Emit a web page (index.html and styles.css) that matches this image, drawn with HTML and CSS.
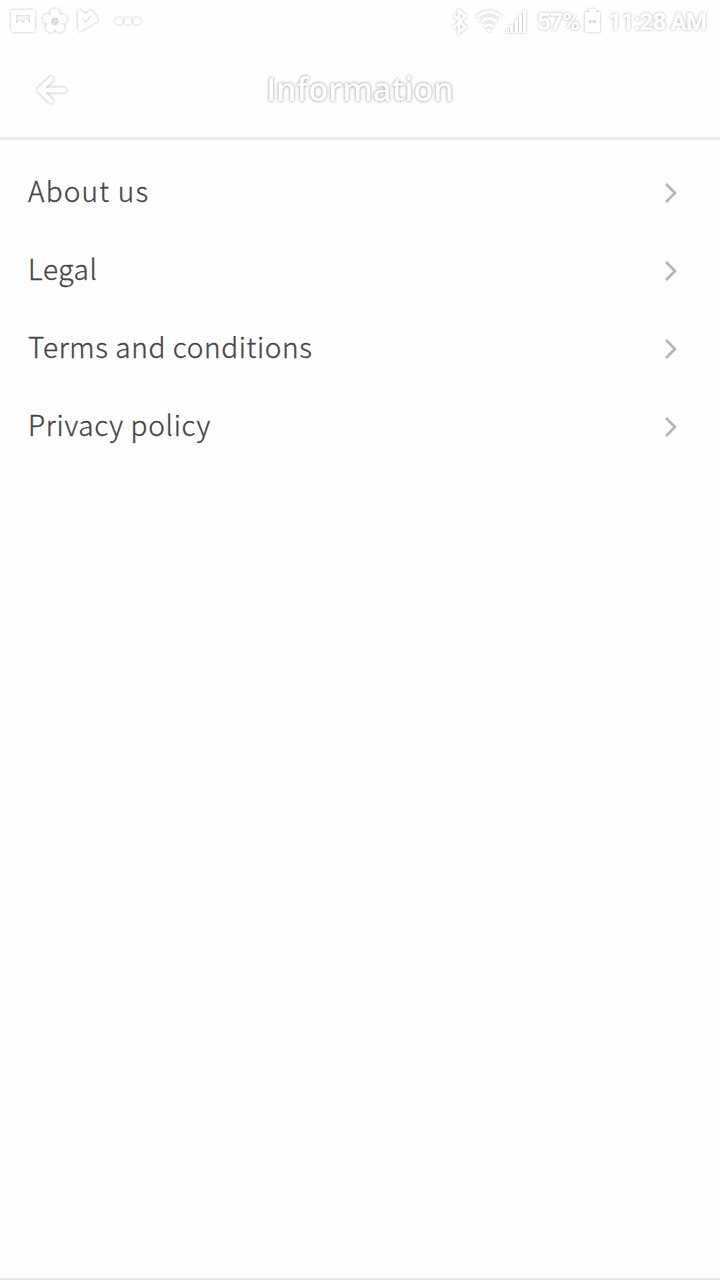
FILE: index.html
```html
<!DOCTYPE html>
<html lang="en">
<head>
<meta charset="utf-8">
<title>Information</title>
<link rel="stylesheet" href="styles.css">
</head>
<body>
<div class="screen">
  <div class="status">
    <svg class="halo left-icons" width="150" height="44" viewBox="0 0 150 44">
      <path fill-rule="evenodd" d="M14 10h18q3 0 3 3v16q0 3-3 3H14q-3 0-3-3V13q0-3 3-3zM16 15v8l4-3 3 3 3-5 4 5v-8z"/>
      <g><circle cx="55" cy="13.5" r="4.8"/><circle cx="62.3" cy="19" r="4.8"/><circle cx="59.5" cy="27.7" r="4.8"/><circle cx="50.5" cy="27.7" r="4.8"/><circle cx="47.7" cy="19" r="4.8"/></g>
      <path class="mark" d="M55 21.5v-4M55 21.5l4-1.3M55 21.5l2.4 3.4M55 21.5l-2.4 3.4M55 21.5l-4-1.3"/>
      <path d="M78 11q0-2 2-1l6 4 3-3q2-1 4 1l4 5q2 3-1 5l-15 9q-3 1-3-2z"/>
      <path class="mark" d="M83 19l3 3 5-6"/>
      <circle cx="119" cy="21" r="3.6"/><circle cx="128" cy="21" r="3.6"/><circle cx="137" cy="21" r="3.6"/>
    </svg>
    <div class="right">
      <svg class="halo" width="84" height="44" viewBox="0 0 84 44">
        <path class="line" d="M1 15l11 12-6 5V11l6 5L1 28"/>
        <path class="line" d="M24 17q12-10 24 0M28 22q8-7 16 0M32 27q4-4 8 0"/>
        <circle cx="36" cy="30" r="2"/>
        <path d="M53 29h3v4h-3zM57 25h3v8h-3zM62 20h3v13h-3zM66 15h3v18h-3zM70 10h3v23h-3z"/>
      </svg>
      <span class="percent">57%</span>
      <svg class="halo battery" width="22" height="44" viewBox="0 0 22 44">
        <path fill-rule="evenodd" d="M7 9h7v3h4v20H3V12h4zM7 20v3h7v-3z"/>
      </svg>
      <span class="time">11:28 AM</span>
    </div>
  </div>
  <header class="header">
    <svg class="halo back" width="40" height="40" viewBox="0 0 40 40"><path class="arrow" d="M20 9L8.5 20 20 31M9 20h24"/></svg>
    <h1 class="title">Information</h1>
  </header>
  <ul class="menu">
    <li class="row"><span class="label about">About us</span><svg class="chev" width="16" height="22" viewBox="0 0 16 22"><path d="M3 2l9 9-9 9"/></svg></li>
    <li class="row"><span class="label">Legal</span><svg class="chev" width="16" height="22" viewBox="0 0 16 22"><path d="M3 2l9 9-9 9"/></svg></li>
    <li class="row"><span class="label">Terms and conditions</span><svg class="chev" width="16" height="22" viewBox="0 0 16 22"><path d="M3 2l9 9-9 9"/></svg></li>
    <li class="row"><span class="label privacy">Privacy policy</span><svg class="chev" width="16" height="22" viewBox="0 0 16 22"><path d="M3 2l9 9-9 9"/></svg></li>
  </ul>
</div>
</body>
</html>
```
FILE: styles.css
```css
* { box-sizing: border-box; }
body { margin: 0; background: #fefefe; }
.screen {
  display: flex;
  flex-direction: column;
  width: 720px;
  height: 1280px;
  background: #fefefe;
  border-bottom: 2px solid #e6e6e6;
}
.status { display: flex; justify-content: space-between; height: 44px; }
.halo {
  display: block;
  flex: none;
  fill: #fff;
  filter: drop-shadow(0 0 1.5px rgba(0, 0, 0, .26));
}
.line { fill: none; stroke: #fff; stroke-width: 2.8; }
.mark { fill: none; stroke: #e2e2e2; stroke-width: 1.5; }
.arrow { fill: none; stroke: #fff; stroke-width: 5; stroke-linecap: round; stroke-linejoin: round; }
.back.halo { filter: drop-shadow(0 0 1.5px rgba(0, 0, 0, .35)); }
.right {
  display: flex;
  align-items: center;
  padding-right: 10px;
  font: 700 24px/44px Roboto, sans-serif;
  color: #fff;
  text-shadow: 0 0 3px rgba(0, 0, 0, .3);
  white-space: nowrap;
}
.percent { width: 45px; letter-spacing: -1.2px; }
.battery { margin-right: 4px; }
.time { width: 102px; letter-spacing: -.9px; }
.header {
  display: grid;
  grid-template-columns: 80px 1fr 80px;
  align-items: center;
  height: 96px;
  padding-bottom: 2px;
  border-bottom: 3px solid #eaeaea;
}
.back { margin-left: 31px; }
.title {
  margin: 0;
  padding-bottom: 1px;
  text-align: center;
  font: 600 32px/44px "Open Sans", sans-serif;
  letter-spacing: .2px;
  color: #fff;
  text-shadow: 0 0 3px rgba(0, 0, 0, .48);
}
.menu { margin: 0; padding: 14px 41px 0 28px; list-style: none; }
.row { display: flex; align-items: center; justify-content: space-between; height: 78px; }
.label {
  padding-bottom: 6px;
  font: 300 28px/40px "Noto Sans CJK SC", "Noto Sans", sans-serif;
  letter-spacing: .6px;
  color: #444;
  -webkit-text-stroke: .3px #444;
}
.about { letter-spacing: 1.2px; }
.privacy { letter-spacing: .7px; }
.chev { fill: none; stroke: #b4b4b4; stroke-width: 2.6; }
```
